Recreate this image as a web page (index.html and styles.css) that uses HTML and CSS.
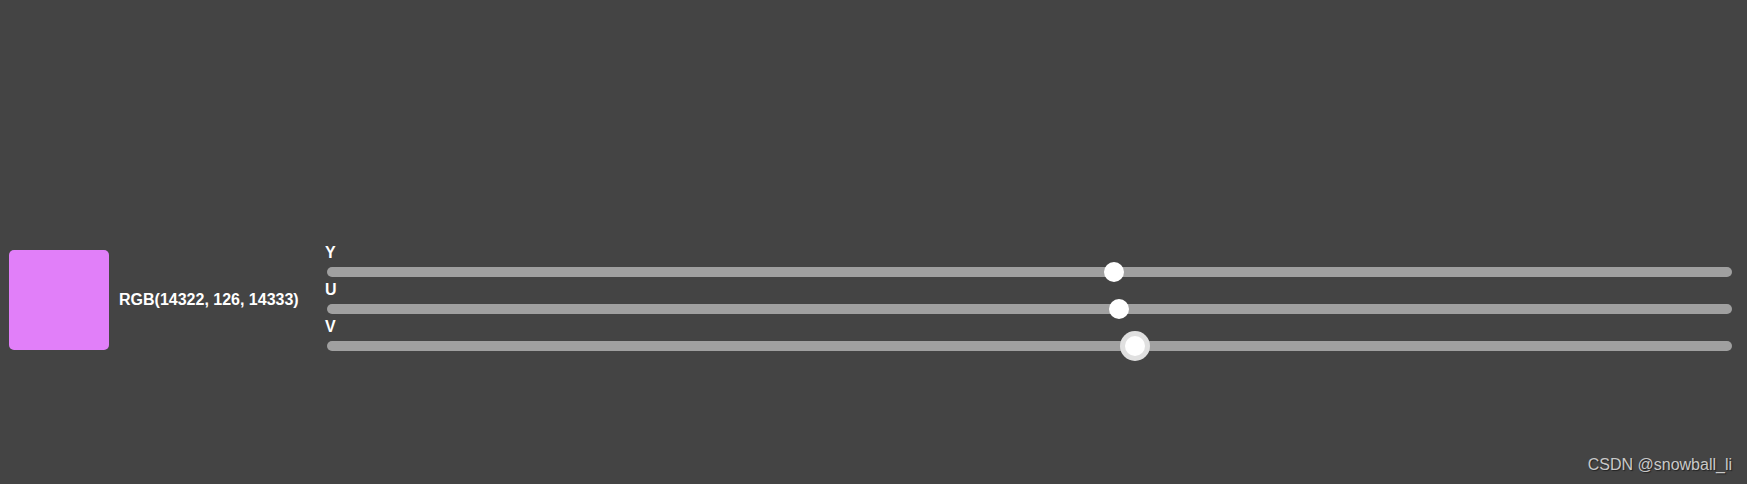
FILE: index.html
```html
<!DOCTYPE html>
<html lang="en">
<head>
  <meta charset="UTF-8" />
  <title>YUV to RGB</title>
  <link rel="stylesheet" href="styles.css">
</head>
<body>
  <div class="panel">
    <div class="swatch"></div>
    <div class="rgb">RGB(14322, 126, 14333)</div>
    <div class="sliders">
      <label class="group">
        <span class="name">Y</span>
        <input type="range" min="0" max="255" value="143">
      </label>
      <label class="group">
        <span class="name">U</span>
        <input type="range" min="0" max="255" value="144">
      </label>
      <label class="group">
        <span class="name">V</span>
        <input type="range" class="active" min="0" max="255" value="147">
      </label>
    </div>
  </div>
  <div class="mark">CSDN @snowball_li</div>
</body>
</html>
```

FILE: styles.css
```css
html, body {
  height: 100%;
}
body {
  margin: 0;
  background: #444444;
  color: #fff;
  font-family: 'Liberation Sans', Arial, sans-serif;
  font-weight: bold;
  font-size: 16px;
  overflow: hidden;
}
.panel {
  display: flex;
  align-items: center;
  padding: 244px 13px 0 9px;
}
.swatch {
  width: 100px;
  height: 100px;
  border-radius: 5px;
  background: #e17ff9;
  flex-shrink: 0;
}
.rgb {
  margin-left: 10px;
  width: 206px;
  flex-shrink: 0;
  line-height: 18px;
}
.sliders {
  flex: 1;
  display: flex;
  flex-direction: column;
}
.group {
  display: flex;
  flex-direction: column;
}
.name {
  line-height: 18px;
  height: 18px;
}
input[type=range] {
  -webkit-appearance: none;
  appearance: none;
  height: 10px;
  margin: 5px 2px 4px;
  background: #a0a0a0;
  border-radius: 5px;
  outline: none;
}
input[type=range]::-webkit-slider-thumb {
  -webkit-appearance: none;
  width: 20px;
  height: 20px;
  border-radius: 50%;
  background: #fff;
  cursor: pointer;
}
input[type=range].active::-webkit-slider-thumb {
  box-shadow: 0 0 0 5px #e0e0e0;
}
.mark {
  position: absolute;
  right: 15px;
  bottom: 10px;
  font-weight: normal;
  font-size: 16px;
  color: #c9c9c9;
  text-shadow: 1px 1px 1px #222;
}
```
